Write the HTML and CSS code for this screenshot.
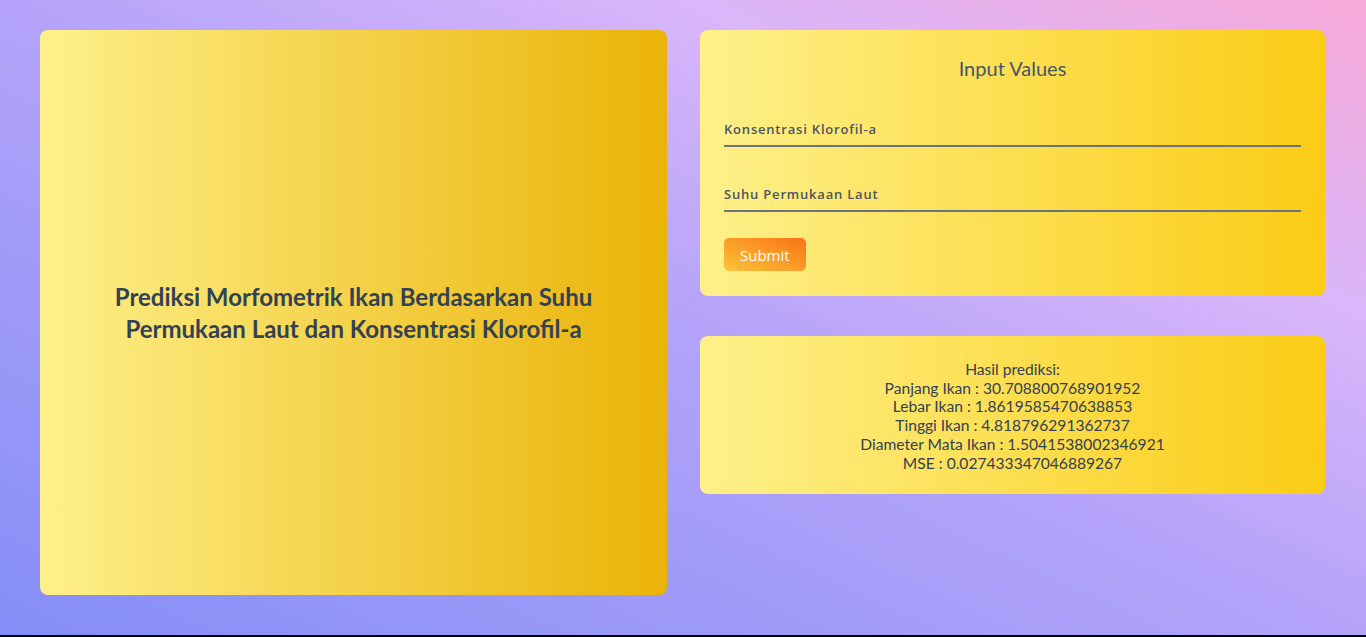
FILE: index.html
```html
<!DOCTYPE html>
<html lang="id">
<head>
<meta charset="utf-8">
<title>Prediksi Morfometrik Ikan</title>
<link rel="stylesheet" href="styles.css">
</head>
<body>
<div class="page">
  <section class="card hero">
    <h1 class="hero-title">Prediksi Morfometrik Ikan Berdasarkan Suhu Permukaan Laut dan Konsentrasi Klorofil-a</h1>
  </section>
  <div class="side">
    <form class="card form-card">
      <h2 class="form-title">Input Values</h2>
      <input class="field" type="text" placeholder="Konsentrasi Klorofil-a">
      <input class="field" type="text" placeholder="Suhu Permukaan Laut">
      <button class="submit" type="button">Submit</button>
    </form>
    <section class="card result-card">
      <p class="result">Hasil prediksi:<br>Panjang Ikan : 30.708800768901952<br>Lebar Ikan : 1.8619585470638853<br>Tinggi Ikan : 4.818796291362737<br>Diameter Mata Ikan : 1.5041538002346921<br>MSE : 0.027433347046889267</p>
    </section>
  </div>
</div>
</body>
</html>
```
FILE: styles.css
```css
* { box-sizing: border-box; }
html, body { margin: 0; padding: 0; }
body { font-family: "Lato", "Noto Sans", sans-serif; color: #334155; }
.page {
  height: 637px;
  border-bottom: 2px solid #000;
  background: linear-gradient(to top right, #848ef6 0%, #b4a3f9 50%, #dab6fa 75%, #f7a9d8 100%);
  display: grid;
  grid-template-columns: 627px 625px;
  column-gap: 33px;
  padding: 30px 41px 40px 40px;
  align-items: start;
}
.card { border-radius: 8px; }
.hero {
  height: 565px;
  background: linear-gradient(to right, #fef08a, #eab308);
  display: flex;
  align-items: center;
  justify-content: center;
  padding: 0 60px;
}
.hero-title {
  margin: 0;
  text-align: center;
  font-size: 24px;
  line-height: 32px;
  font-weight: 700;
  color: #334155;
}
.side { display: flex; flex-direction: column; gap: 40px; }
.form-card {
  background: linear-gradient(to right, #fef08a, #facc15);
  padding: 24px 24px 25px;
  display: flex;
  flex-direction: column;
  align-items: flex-start;
}
.form-title {
  align-self: stretch;
  margin: 0 0 30px;
  text-align: center;
  font-size: 20px;
  line-height: 28px;
  font-weight: 400;
  color: #475569;
}
.field {
  width: 100%;
  height: 35px;
  margin: 0 0 30px;
  padding: 0;
  border: 0;
  border-bottom: 2px solid #6b7280;
  background: transparent;
  font-family: "Open Sans", sans-serif;
  font-size: 13px;
  font-weight: 600;
  letter-spacing: 0.8px;
  color: #4b5563;
  outline: none;
}
.field::placeholder { color: #4b5563; opacity: 1; }
.field + .field { margin-bottom: 26px; }
.submit {
  height: 33px;
  padding: 0 16px;
  border: 0;
  border-radius: 5px;
  background: linear-gradient(to top right, #fcc43a, #f97316);
  color: #fff;
  font-family: "Open Sans", sans-serif;
  font-size: 15px;
}
.result-card {
  background: linear-gradient(to right, #fef08a, #facc15);
  padding: 24px 20px 22px;
}
.result {
  margin: 0;
  text-align: center;
  font-size: 15.6px;
  line-height: 18.7px;
  color: #334155;
}
```
